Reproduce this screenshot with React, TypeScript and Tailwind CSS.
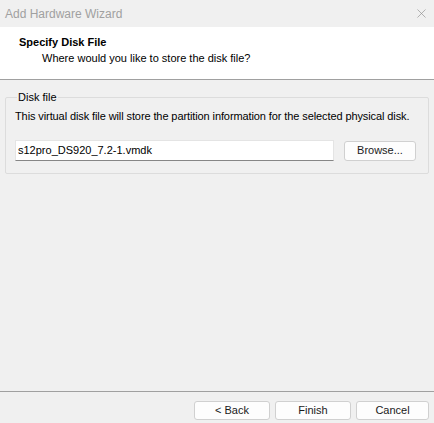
import { X } from "lucide-react";

const font = { fontFamily: '"Liberation Sans", Arial, sans-serif' };

function DlgButton({ label, className = "" }: { label: string; className?: string }) {
  return (
    <button
      type="button"
      className={`h-[19px] rounded-[3px] border border-[#d0d0d0] bg-[#fdfdfd] text-[11px] leading-none text-[#1a1a1a] ${className}`}
    >
      {label}
    </button>
  );
}

export default function App() {
  return (
    <div
      className="flex h-[423px] w-[434px] flex-col overflow-hidden bg-[#f0f0f0] text-[11px] text-black"
      style={font}
    >
      {/* title bar */}
      <div className="flex h-[27px] items-center justify-between bg-[#f0f0f0] pl-[5px] pr-[5px]">
        <span className="text-[12px] text-[#a0a0a0]">Add Hardware Wizard</span>
        <X className="h-[15px] w-[15px] text-[#8a8a8a]" strokeWidth={1} />
      </div>

      {/* header */}
      <div className="flex h-[53px] flex-col border-b border-[#a0a0a0] bg-white pl-[19px] pt-[7px]">
        <span className="font-bold leading-[16px]">Specify Disk File</span>
        <span className="pl-[23px] leading-[16px]">Where would you like to store the disk file?</span>
      </div>

      {/* body */}
      <div className="flex-1 px-[5px] pt-[10px]">
        <fieldset className="h-[84px] min-w-0 rounded-[2px] border border-[#dcdcdc] pl-[9px] pr-[12px]">
          <legend className="ml-[2px] px-[1px] leading-[14px]">Disk file</legend>
          <div className="mt-[4px] whitespace-nowrap leading-[16px] tracking-[-0.1px]">
            This virtual disk file will store the partition information for the selected physical disk.
          </div>
          <div className="mt-[16px] flex items-center justify-between">
            <div className="flex h-[21px] w-[319px] items-center border border-b-[#868686] border-[#e4e4e4] bg-white pl-[2px]">
              s12pro_DS920_7.2-1.vmdk
            </div>
            <DlgButton label="Browse..." className="h-[20px] w-[72px]" />
          </div>
        </fieldset>
      </div>

      {/* footer */}
      <div className="flex h-[32px] items-start justify-end gap-[5px] border-t border-[#a0a0a0] pr-[5px] pt-[9px]">
        <DlgButton label="< Back" className="w-[76px]" />
        <DlgButton label="Finish" className="w-[76px]" />
        <DlgButton label="Cancel" className="w-[73px]" />
      </div>
    </div>
  );
}
